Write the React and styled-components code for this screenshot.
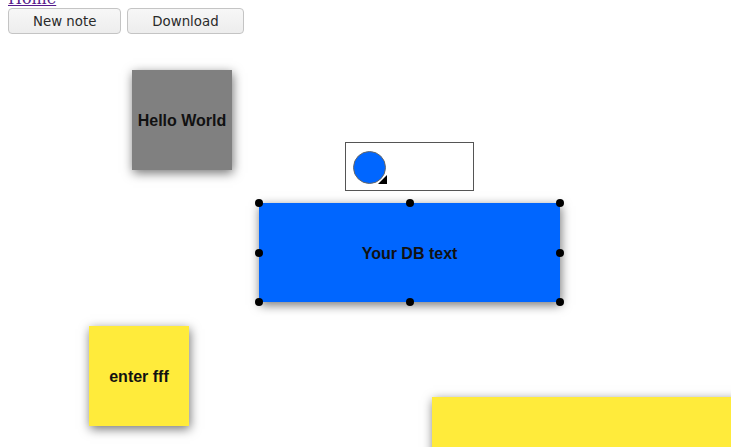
import React from "react";
import styled, { createGlobalStyle } from "styled-components";

const GlobalStyle = createGlobalStyle`
  html {
    overflow: hidden;
  }
  body {
    margin: 0 8px 8px;
    background: #fff;
  }
`;

const HomeRow = styled.div`
  height: 8px;
  font-family: "DejaVu Serif", serif;
  font-size: 16px;
  line-height: 0;
  a {
    position: relative;
    top: -1px;
    color: #551a8b;
    text-decoration: underline;
  }
`;

const Toolbar = styled.div`
  display: flex;
  gap: 6px;
`;

const Button = styled.button`
  height: 26px;
  padding: 0 24px;
  font-family: "DejaVu Sans", sans-serif;
  font-size: 13.33px;
  color: #2a2a2a;
  background: linear-gradient(#f7f7f7, #ededed);
  border: 1px solid #c4c4c4;
  border-radius: 4px;
  cursor: pointer;
`;

const Stage = styled.div`
  position: relative;
  margin-left: -8px;
  width: calc(100% + 16px);
  height: 413px;
  overflow: hidden;
`;

const Note = styled.div`
  position: absolute;
  left: ${p => p.$x}px;
  top: ${p => p.$y}px;
  width: ${p => p.$w}px;
  height: ${p => p.$h}px;
  box-sizing: border-box;
  padding-top: 2px;
  background: ${p => p.$color};
  box-shadow: 1px 3px 10px rgba(0, 0, 0, 0.55);
  display: flex;
  align-items: center;
  justify-content: center;
  font-family: "Liberation Sans", Arial, sans-serif;
  font-weight: bold;
  font-size: 16px;
  color: #111;
`;

const Handle = styled.span`
  position: absolute;
  width: 8px;
  height: 8px;
  border-radius: 50%;
  background: #000;
  left: ${p => p.$x}%;
  top: ${p => p.$y}%;
  transform: translate(-50%, -50%);
`;

const Picker = styled.div`
  position: absolute;
  left: 345px;
  top: 108px;
  width: 127px;
  height: 47px;
  border: 1px solid #555;
  background: #fff;
`;

const Swatch = styled.div`
  position: absolute;
  left: 7px;
  top: 8px;
  width: 31px;
  height: 31px;
  border-radius: 50%;
  background: #0066ff;
  border: 1px solid #666;
`;

const Corner = styled.svg`
  position: absolute;
  left: 32px;
  top: 32px;
`;

const handles = [
  [0, 0], [50, 0], [100, 0],
  [0, 50], [100, 50],
  [0, 100], [50, 100], [100, 100],
];

export default function App() {
  return (
    <>
      <GlobalStyle />
      <HomeRow>
        <a href="#">Home</a>
      </HomeRow>
      <Toolbar>
        <Button>New note</Button>
        <Button>Download</Button>
      </Toolbar>
      <Stage>
        <Note $x={132} $y={36} $w={100} $h={100} $color="#808080">
          Hello World
        </Note>
        <Picker>
          <Swatch />
          <Corner width="9" height="9" viewBox="0 0 9 9">
            <polygon points="9,0 9,9 0,9" fill="#000" />
          </Corner>
        </Picker>
        <Note $x={259} $y={169} $w={301} $h={99} $color="#0066ff">
          Your DB text
          {handles.map(([x, y]) => (
            <Handle key={`${x}-${y}`} $x={x} $y={y} />
          ))}
        </Note>
        <Note $x={89} $y={292} $w={100} $h={100} $color="#ffeb3b">
          enter fff
        </Note>
        <Note $x={432} $y={363} $w={320} $h={100} $color="#ffeb3b" />
      </Stage>
    </>
  );
}
